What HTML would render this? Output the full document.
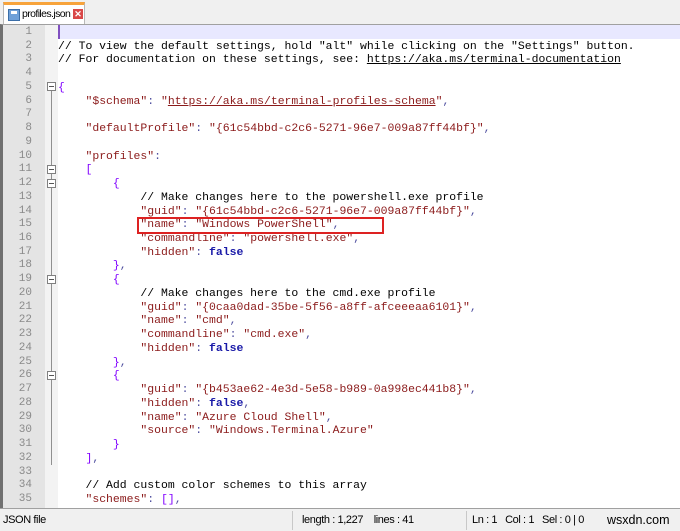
<!DOCTYPE html>
<html><head><style>
*{margin:0;padding:0;box-sizing:border-box}
body{width:680px;height:531px;background:#f0f0f0;position:relative;overflow:hidden;font-family:"Liberation Sans",sans-serif}
.tab{position:absolute;left:3px;top:2px;width:82px;height:23px;background:#fff;border:1px solid #b8b8b8;border-bottom:none;border-top:3px solid #f7a33b}
.tab .ic{position:absolute;left:4px;top:4px;width:12px;height:12px;background:#6fa0d8;border:1px solid #3b6ea8}
.tab .ic:after{content:"";position:absolute;left:2px;top:1px;width:6px;height:3px;background:#fff}
.tab .t{position:absolute;left:18px;top:3px;font-size:10.5px;color:#000;letter-spacing:-0.6px;white-space:nowrap}
.tab .x{position:absolute;left:69px;top:4px;width:10px;height:10px;background:#d94848;color:#fff;font-size:9px;line-height:10px;text-align:center;font-weight:bold}
.ed{position:absolute;left:0;top:24px;width:680px;height:484px;background:#fff;border-left:3px solid #707070;border-top:1px solid #a0a0a0;overflow:hidden}
.gut{position:absolute;left:0;top:0;width:42px;height:100%;background:#e4e4e4}
.fold{position:absolute;left:42px;top:0;width:13px;height:100%;background:#f3f3f3}
.cur{position:absolute;left:55px;top:0;width:625px;height:14px;background:#e8e8ff;border-left:2px solid #8050c0}
.lines{position:absolute;left:0;top:1px;font-family:"Liberation Mono",monospace;font-size:11.45px;line-height:13.74px;white-space:pre}
.num{position:absolute;left:0;width:29px;text-align:right;color:#8a8a8a;font-size:11px}
.code{position:absolute;left:55px;color:#000}
.s{color:#8b1a1a}.p{color:#8000ff}.o{color:#5050a0}.k{color:#1a1aa8;font-weight:bold}
.u{text-decoration:underline}
.fb{position:absolute;left:44px;width:9px;height:9px;border:1px solid #808080;background:#fff}
.fb:after{content:"";position:absolute;left:1px;top:3px;width:5px;height:1px;background:#555}
.vl{position:absolute;left:48px;width:1px;background:#909090}
.box{position:absolute;left:134px;top:192px;width:247px;height:17px;border:2px solid #d22}
.status{position:absolute;left:0;top:508px;width:680px;height:23px;background:#f0f0f0;border-top:1px solid #a0a0a0;font-size:11px;color:#000;letter-spacing:-0.4px}
.status span{position:absolute;top:5px;white-space:nowrap}
.sep{position:absolute;top:2px;width:1px;height:19px;background:#c8c8c8}
</style></head><body>
<div class="tab"><div class="ic"></div><div class="t">profiles.json</div><div class="x">✕</div></div>
<div class="ed">
<div class="gut"></div><div class="fold"></div><div class="cur"></div>
<div class="vl" style="top:62px;height:378px"></div>
<div class="fb" style="top:57px"></div>
<div class="fb" style="top:140px"></div>
<div class="fb" style="top:154px"></div>
<div class="fb" style="top:250px"></div>
<div class="fb" style="top:346px"></div>
<div class="lines">
<div class="num" style="top:0">1
2
3
4
5
6
7
8
9
10
11
12
13
14
15
16
17
18
19
20
21
22
23
24
25
26
27
28
29
30
31
32
33
34
35</div>
<div class="code" style="top:0">
// To view the default settings, hold "alt" while clicking on the "Settings" button.
// For documentation on these settings, see: <span class="u">https://aka.ms/terminal-documentation</span>

<span class="p">{</span>
    <span class="s">"$schema"</span><span class="o">:</span> <span class="s">"<span class="u">https://aka.ms/terminal-profiles-schema</span>"</span><span class="o">,</span>

    <span class="s">"defaultProfile"</span><span class="o">:</span> <span class="s">"{61c54bbd-c2c6-5271-96e7-009a87ff44bf}"</span><span class="o">,</span>

    <span class="s">"profiles"</span><span class="o">:</span>
    <span class="p">[</span>
        <span class="p">{</span>
            // Make changes here to the powershell.exe profile
            <span class="s">"guid"</span><span class="o">:</span> <span class="s">"{61c54bbd-c2c6-5271-96e7-009a87ff44bf}"</span><span class="o">,</span>
            <span class="s">"name"</span><span class="o">:</span> <span class="s">"Windows PowerShell"</span><span class="o">,</span>
            <span class="s">"commandline"</span><span class="o">:</span> <span class="s">"powershell.exe"</span><span class="o">,</span>
            <span class="s">"hidden"</span><span class="o">:</span> <span class="k">false</span>
        <span class="p">}</span><span class="o">,</span>
        <span class="p">{</span>
            // Make changes here to the cmd.exe profile
            <span class="s">"guid"</span><span class="o">:</span> <span class="s">"{0caa0dad-35be-5f56-a8ff-afceeeaa6101}"</span><span class="o">,</span>
            <span class="s">"name"</span><span class="o">:</span> <span class="s">"cmd"</span><span class="o">,</span>
            <span class="s">"commandline"</span><span class="o">:</span> <span class="s">"cmd.exe"</span><span class="o">,</span>
            <span class="s">"hidden"</span><span class="o">:</span> <span class="k">false</span>
        <span class="p">}</span><span class="o">,</span>
        <span class="p">{</span>
            <span class="s">"guid"</span><span class="o">:</span> <span class="s">"{b453ae62-4e3d-5e58-b989-0a998ec441b8}"</span><span class="o">,</span>
            <span class="s">"hidden"</span><span class="o">:</span> <span class="k">false</span><span class="o">,</span>
            <span class="s">"name"</span><span class="o">:</span> <span class="s">"Azure Cloud Shell"</span><span class="o">,</span>
            <span class="s">"source"</span><span class="o">:</span> <span class="s">"Windows.Terminal.Azure"</span>
        <span class="p">}</span>
    <span class="p">]</span><span class="o">,</span>

    // Add custom color schemes to this array
    <span class="s">"schemes"</span><span class="o">:</span> <span class="p">[]</span><span class="o">,</span></div>
</div>
<div class="box"></div>
</div>
<div class="status">
<span style="left:3px">JSON file</span>
<div class="sep" style="left:292px"></div>
<span style="left:302px">length : 1,227&nbsp;&nbsp;&nbsp; lines : 41</span>
<div class="sep" style="left:466px"></div>
<span style="left:472px">Ln : 1&nbsp;&nbsp; Col : 1&nbsp;&nbsp; Sel : 0 | 0</span>
<span style="left:607px;font-size:12.5px;top:4px;letter-spacing:0">wsxdn.com</span>
</div>
</body></html>
